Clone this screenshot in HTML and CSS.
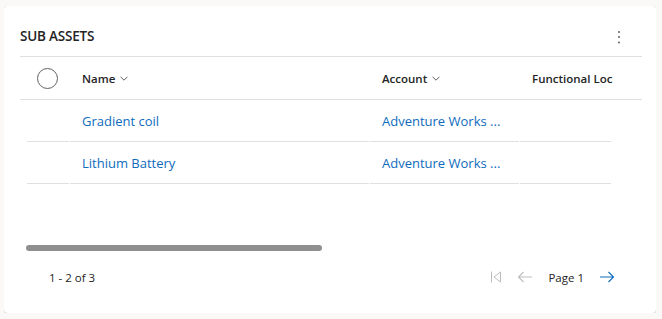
FILE: index.html
```html
<!DOCTYPE html>
<html lang="en">
<head>
    <meta charset="UTF-8">
    <meta name="viewport" content="width=device-width, initial-scale=1.0">
    <title>Sub Assets</title>
    <link rel="stylesheet" href="styles.css">
</head>
<body>
    <div class="card">
        <div class="card-header">
            <div class="title">SUB ASSETS</div>
            <button class="more-btn" aria-label="More commands">
                <svg width="4" height="16" viewBox="0 0 4 16">
                    <circle cx="2" cy="3" r="1" fill="#616161"/>
                    <circle cx="2" cy="8" r="1" fill="#616161"/>
                    <circle cx="2" cy="13.5" r="1" fill="#616161"/>
                </svg>
            </button>
        </div>

        <div class="grid">
            <div class="grid-head">
                <div class="cell-select">
                    <span class="radio"></span>
                </div>
                <div class="head-cell col-name">
                    Name
                    <svg class="chevron" width="8" height="5" viewBox="0 0 8 5">
                        <path d="M0.6 0.8 L4 4.2 L7.4 0.8" fill="none" stroke="#616161" stroke-width="1"/>
                    </svg>
                </div>
                <div class="head-cell col-account">
                    Account
                    <svg class="chevron" width="8" height="5" viewBox="0 0 8 5">
                        <path d="M0.6 0.8 L4 4.2 L7.4 0.8" fill="none" stroke="#616161" stroke-width="1"/>
                    </svg>
                </div>
                <div class="head-cell col-func">Functional Loc</div>
            </div>

            <div class="grid-body">
                <div class="grid-row">
                    <div class="cell cell-select-row"></div>
                    <div class="cell col-name-row"><a href="#">Gradient coil</a></div>
                    <div class="cell col-account-row"><a href="#">Adventure Works ...</a></div>
                    <div class="cell col-func-row"></div>
                </div>
                <div class="grid-row">
                    <div class="cell cell-select-row"></div>
                    <div class="cell col-name-row"><a href="#">Lithium Battery</a></div>
                    <div class="cell col-account-row"><a href="#">Adventure Works ...</a></div>
                    <div class="cell col-func-row"></div>
                </div>
            </div>

            <div class="scrollbar"></div>
        </div>

        <div class="footer">
            <div class="count">1 - 2 of 3</div>
            <div class="pager">
                <svg width="16" height="16" viewBox="0 0 16 16">
                    <path d="M3.5 2.5 V13.5" stroke="#bdbdbd" stroke-width="1" fill="none"/>
                    <path d="M12.5 3 L6 8 L12.5 13 Z" stroke="#bdbdbd" stroke-width="1" fill="none" stroke-linejoin="round"/>
                </svg>
                <svg width="16" height="16" viewBox="0 0 16 16">
                    <path d="M15 8 H1.5 M6.5 3 L1.5 8 L6.5 13" stroke="#bdbdbd" stroke-width="1.1" fill="none"/>
                </svg>
                <span class="page">Page 1</span>
                <svg width="16" height="16" viewBox="0 0 16 16">
                    <path d="M1 8 H14.5 M9.5 3 L14.5 8 L9.5 13" stroke="#0f6cbd" stroke-width="1.1" fill="none"/>
                </svg>
            </div>
        </div>
    </div>
</body>
</html>
```

FILE: styles.css
```css
body {
    margin: 6px 6px 6px 4px;
    background-color: #faf9f8;
    font-family: "Open Sans", "Noto Sans", sans-serif;
    color: #242424;
}

.card {
    background: white;
    border-radius: 4px;
    box-shadow: 0 1px 2px rgba(0, 0, 0, 0.14), 0 0 2px rgba(0, 0, 0, 0.12);
    padding: 0 14px 0 16px;
    height: 307px;
    box-sizing: border-box;
}

.card-header {
    display: flex;
    justify-content: space-between;
    align-items: center;
    height: 51px;
    padding-top: 9px;
    box-sizing: border-box;
    border-bottom: 1px solid #e0e0e0;
}

.title {
    font-size: 13.5px;
    font-weight: 600;
    line-height: 20px;
    letter-spacing: -0.2px;
}

.more-btn {
    border: none;
    background: none;
    padding: 0;
    margin-right: 21px;
    margin-top: 2px;
    display: flex;
}

.grid-head {
    display: flex;
    height: 42px;
    align-items: center;
    border-bottom: 1px solid #e0e0e0;
    font-size: 11.5px;
    font-weight: 600;
}

.cell-select {
    width: 50px;
    display: flex;
    align-items: center;
}

.radio {
    width: 19px;
    height: 19px;
    border: 1px solid #616161;
    border-radius: 50%;
    margin-left: 17px;
}

.head-cell {
    padding-left: 12px;
    box-sizing: border-box;
    white-space: nowrap;
    display: flex;
    align-items: center;
}

.chevron {
    margin-left: 5px;
}

.col-name {
    width: 300px;
}

.col-account {
    width: 150px;
}

.col-func {
    width: 91px;
}

.grid-body {
    height: 144px;
}

.grid-row {
    display: flex;
    gap: 1px;
    padding-left: 7px;
}

.cell {
    height: 41px;
    border-bottom: 1px solid #e0e0e0;
    display: flex;
    align-items: center;
    padding-left: 12px;
    box-sizing: content-box;
    font-size: 13px;
    white-space: nowrap;
}

.cell-select-row {
    width: 42px;
    padding-left: 0;
}

.col-name-row {
    width: 287px;
}

.col-account-row {
    width: 137px;
}

.col-func-row {
    width: 79px;
}

.cell a {
    color: #0f6cbd;
    text-decoration: none;
}

.scrollbar {
    width: 296px;
    height: 6px;
    margin: 1px 0 0 6px;
    border-radius: 3px;
    background: #8f8f8f;
}

.footer {
    display: flex;
    justify-content: space-between;
    align-items: center;
    height: 20px;
    margin-top: 16px;
    padding: 0 27px 0 29px;
    font-size: 11.5px;
}

.pager {
    display: flex;
    align-items: center;
    gap: 13px;
}

.page {
    margin: 0 2px;
}
```
